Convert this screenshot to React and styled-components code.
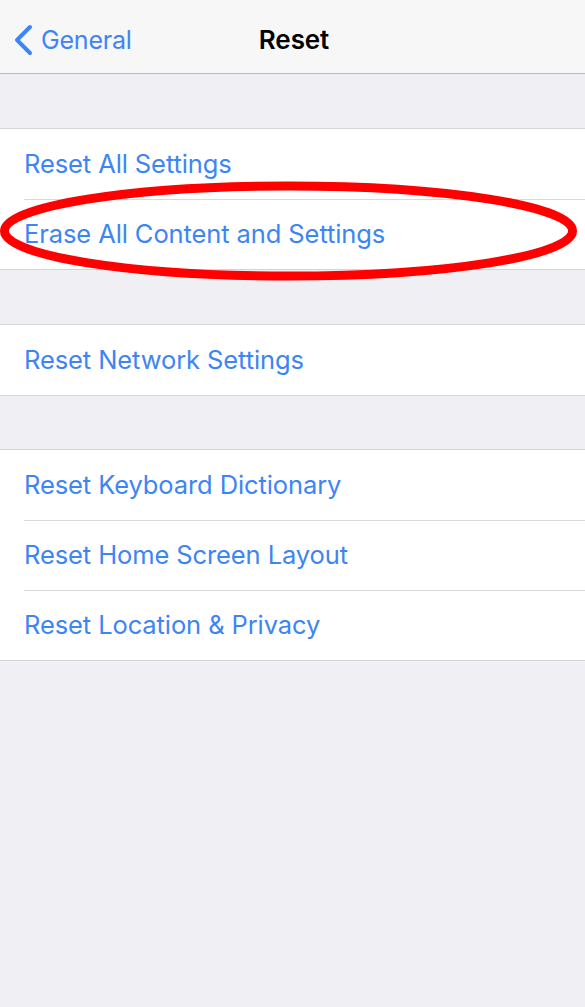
import React from "react";
import styled, { createGlobalStyle } from "styled-components";

const Global = createGlobalStyle`
  html, body { margin: 0; padding: 0; background: #efeff4; }
  body { font-family: Inter, "Noto Sans", sans-serif; -webkit-font-smoothing: antialiased; }
`;

const Page = styled.div`
  width: 585px;
  height: 1007px;
  background: #efeff4;
  display: flex;
  flex-direction: column;
  position: relative;
  overflow: hidden;
`;

const NavBar = styled.header`
  height: 74px;
  box-sizing: border-box;
  background: #f7f7f8;
  border-bottom: 1px solid #b9b9bd;
  display: grid;
  grid-template-columns: 1fr auto 1fr;
  align-items: center;
  padding: 6px 0 0 13px;
`;

const Back = styled.div`
  display: flex;
  align-items: center;
  gap: 7px;
  color: #3d85f5;
  font-size: 25px;
  letter-spacing: -0.2px;
`;

const Title = styled.h1`
  margin: 0;
  font-size: 26px;
  font-weight: 600;
  color: #000;
  letter-spacing: -0.1px;
  transform: translateX(-5px);
`;

const Group = styled.section`
  margin-top: ${(p) => p.$gap}px;
  background: #fff;
  border-top: 1px solid #d4d4d8;
  border-bottom: 1px solid #d4d4d8;
`;

const Row = styled.div`
  height: 70px;
  margin-left: 24px;
  display: flex;
  align-items: center;
  color: #3d85f5;
  font-size: 25.5px;
  letter-spacing: -0.1px;
  box-sizing: border-box;
  padding-bottom: 2px;
  & + & {
    border-top: 1px solid #d9d9dd;
  }
`;

const Ring = styled.svg`
  position: absolute;
  left: 0;
  top: 0;
  pointer-events: none;
`;

const Chevron = () => (
  <svg width="21" height="32" viewBox="0 0 21 32">
    <path d="M17 3 L4 16 L17 29" fill="none" stroke="#3d85f5" strokeWidth="4" strokeLinecap="round" strokeLinejoin="round" />
  </svg>
);

export default function App() {
  return (
    <Page>
      <Global />
      <NavBar>
        <Back>
          <Chevron />
          General
        </Back>
        <Title>Reset</Title>
        <div />
      </NavBar>
      <Group $gap={54}>
        <Row>Reset All Settings</Row>
        <Row>Erase All Content and Settings</Row>
      </Group>
      <Group $gap={54}>
        <Row>Reset Network Settings</Row>
      </Group>
      <Group $gap={53}>
        <Row>Reset Keyboard Dictionary</Row>
        <Row>Reset Home Screen Layout</Row>
        <Row>Reset Location &amp; Privacy</Row>
      </Group>
      <Ring width="585" height="1007" viewBox="0 0 585 1007">
        <ellipse cx="288.5" cy="231" rx="284" ry="45" fill="none" stroke="#ff0000" strokeWidth="9" />
      </Ring>
    </Page>
  );
}
